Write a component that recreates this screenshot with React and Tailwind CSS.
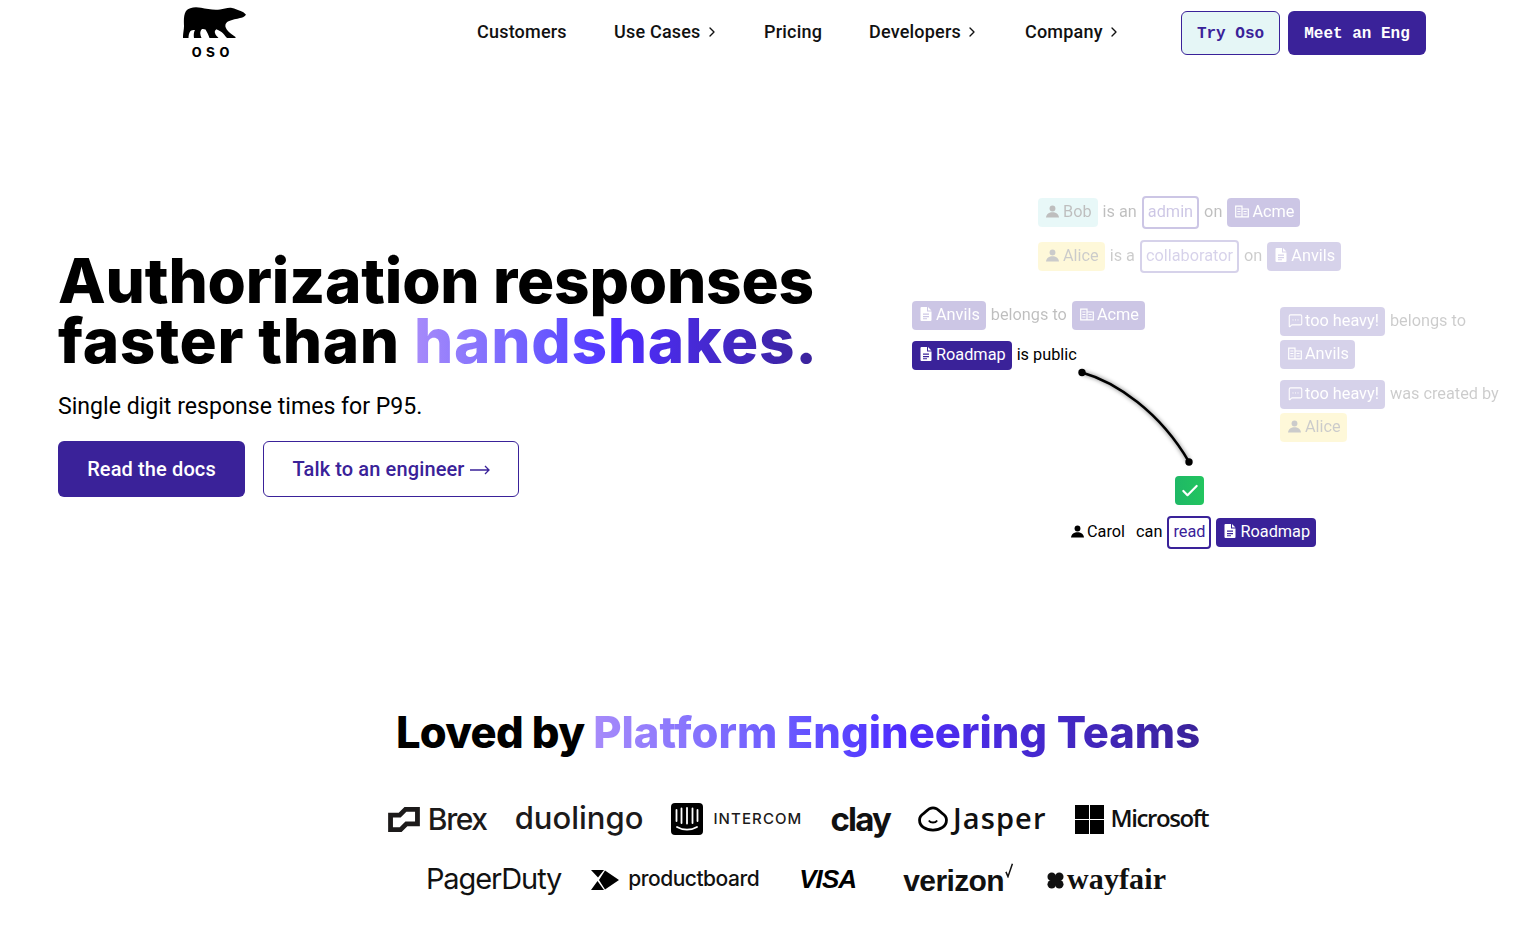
import React from "react";
import { ChevronRight, MessageSquareMore, Check } from "lucide-react";

const UserIcon = ({ className = "" }) => (
  <svg viewBox="0 0 12 12" className={`w-[13px] h-[13px] shrink-0 -mt-[1px] ${className}`} fill="currentColor">
    <circle cx="6" cy="3.2" r="2.7" />
    <path d="M0 11.600C0.300 8.400 3 6.800 6 6.800s5.700 1.600 6 4.800z" />
  </svg>
);
const DocIcon = () => (
  <svg viewBox="0 0 12 14" className="w-[12px] h-[14px] shrink-0 -mt-[2px]">
    <path fill="currentColor" fillRule="evenodd" d="M1.500 0H7V4.500H11.500V13a1 1 0 0 1-1 1H1.500a1 1 0 0 1-1-1V1a1 1 0 0 1 1-1zM8 0L11.500 3.500H8zM3 6.500V7.700H9V6.500zM3 9V10.200H9V9zM3 11.200V12.200H7V11.200z" />
  </svg>
);
const OrgIcon = () => (
  <svg viewBox="0 0 14 12" className="w-[14px] h-[13px] shrink-0 -mt-[2px] -mr-[1px]" fill="none" stroke="currentColor" strokeWidth="1.200">
    <path d="M.7.7H7V11.300H.7zM7 3.500H13.300V11.300H7zM2.300 3.500H5.500M2.300 6H5.500M2.300 8.500H5.500M8.500 6H11.700M8.500 8.500H11.700" />
  </svg>
);
const CommentIcon = () => <MessageSquareMore className="w-[15px] h-[15px] shrink-0 -mt-[2px] -mr-[2px]" strokeWidth={1.7} />;

const Pill = ({ icon, children, color = "purple" }) => {
  const cls = {
    purple: "bg-[#3a2299] text-white",
    cyan: "bg-[#a5e4e4] text-black",
    yellow: "bg-[#fde047] text-black",
  }[color];
  return (
    <span className={`inline-flex h-[29px] items-center gap-[4px] rounded-[4px] pb-[1px] pl-[8px] pr-[6px] ${cls}`}>
      {icon}
      {children}
    </span>
  );
};
const Outline = ({ children }) => (
  <span className="inline-flex h-[33px] items-center rounded-[4px] border-2 border-[#3a2299] px-[4px] pb-[1px] text-[#3a2299]">
    {children}
  </span>
);
const Row = ({ className, children }) => (
  <div className={`absolute flex items-center gap-[5px] whitespace-nowrap text-black ${className}`}>{children}</div>
);

const NavItem = ({ children, chevron, className = "" }) => (
  <a className={`flex items-center gap-[3px] text-[18px] font-medium tracking-[0.2px] text-[#111] ${className}`}>
    {children}
    {chevron && <ChevronRight className="w-[16px] h-[16px] mt-[1px]" strokeWidth={2} />}
  </a>
);

const Bear = () => (
  <svg viewBox="0 0 64 33" className="w-[64px] h-[33px]" fill="#000">
    <path d="M63 7.700C61 10 59 11 57 11C54 12 49 12.500 45.500 14.300C43 15.500 42 17.500 42.500 20C43.500 23 46.500 26 49 27.500L52.500 30V31H44C42 29 40.500 26.500 38.500 25C37 24 35 23 33.300 22.300C32 23.500 31.500 24.500 32 26C32.500 28 34 29.500 35.500 31H26.500C25.500 28 24 25 22.500 22.500C21 21.800 20 21.800 19 22C16.500 24.500 17 28 18.500 31H11C10.500 28 10.800 25 12 23C10 23 8.500 23 7.500 24C6 26 5.500 28.500 5.500 31H0C-0.200 27 1 23 1 19C0.800 14 0.500 8 3 4C6 0.500 12 -0.500 18 0.800C24 2.200 31 3.200 37 2.500C41 2 45 0.300 49 1C52 1.500 54 2.800 57 3.800C59.500 4.500 61.500 6 63 7.700Z" />
  </svg>
);

const Brex = () => (
  <div className="flex items-center gap-[8px]">
    <svg viewBox="0 0 33 26" className="w-[32px] h-[25px]" fill="#1c1a1a">
      <path fillRule="evenodd" d="M0 6H11L17 0H33V20H20L14 26H0zM5 11V21H12L18 15H28V5H19L13 11z" />
    </svg>
    <span className="text-[30px] font-['Inter'] font-medium tracking-[-1.4px] text-[#1c1a1a]">Brex</span>
  </div>
);
const Duolingo = () => (
  <span className="-mt-[4px] text-[31px] font-['Inter'] font-medium tracking-[0px] text-[#1c1a1a] leading-none">duolingo</span>
);
const Intercom = () => (
  <div className="flex items-center gap-[10px]">
    <svg viewBox="0 0 32 32" className="w-[32px] h-[32px]">
      <rect width="32" height="32" rx="4" fill="#000" />
      <g stroke="#fff" strokeWidth="1.800" strokeLinecap="round" fill="none">
        <path d="M5.500 7V18M10.500 5.500V20M16 5V20.500M21.500 5.500V20M26.500 7V18" />
        <path d="M6 24C12 27.500 20 27.500 26 24" />
      </g>
    </svg>
    <span className="text-[15px] font-['Inter'] font-medium tracking-[1.1px] text-[#1c1a1a]">INTERCOM</span>
  </div>
);
const Clay = () => (
  <span className="text-[33px] font-['Inter'] font-bold tracking-[-1.8px] text-[#111] leading-none">clay</span>
);
const Jasper = () => (
  <div className="flex items-center gap-[5px]">
    <svg viewBox="0 0 32 28" className="w-[30px] h-[26px]" fill="none" stroke="#000" strokeWidth="3">
      <path d="M16 2C21 2 23 5.500 26 8C29 10 30.500 12 30.500 15C30.500 22 24 26 16 26C8 26 1.500 22 1.500 15C1.500 12 3 10 6 8C9 5.500 11 2 16 2Z" />
      <path d="M11.500 15.500C13.500 18.500 18.500 18.500 20.500 15.500" strokeWidth="2" />
    </svg>
    <span className="-mt-[3px] text-[29px] font-['Open_Sans'] font-semibold tracking-[1.1px] text-[#111] leading-none">Jasper</span>
  </div>
);
const Microsoft = () => (
  <div className="flex items-center gap-[7px]">
    <div className="grid h-[29px] w-[29px] grid-cols-2 gap-[1px]">
      <div className="bg-black" />
      <div className="bg-black" />
      <div className="bg-black" />
      <div className="bg-black" />
    </div>
    <span className="-mt-[2px] text-[24px] font-['Open_Sans'] font-semibold tracking-[-1.4px] text-[#111] leading-none">Microsoft</span>
  </div>
);
const PagerDuty = () => (
  <span className="-mt-[3px] text-[29px] font-['Inter'] font-normal tracking-[-1.1px] text-[#111] leading-none">PagerDuty</span>
);
const Productboard = () => (
  <div className="flex items-center gap-[9px]">
    <svg viewBox="0 0 28 20" className="w-[28px] h-[20px]" fill="#000">
      <path d="M0 0H13L7 7.500zM0 20H13L6.500 11zM14 0.500L28 10L14 19.500L8 10z" />
    </svg>
    <span className="-mt-[3px] text-[21px] font-['Inter'] font-medium tracking-[-0.5px] text-[#111] leading-none">productboard</span>
  </div>
);
const Visa = () => (
  <span className="text-[26px] font-['Liberation_Sans'] font-bold italic tracking-[-0.9px] text-black leading-none">VISA</span>
);
const Verizon = () => (
  <div className="flex items-start">
    <span className="mt-[1px] text-[30px] font-['Liberation_Sans'] font-bold tracking-[-0.6px] text-[#111] leading-none">verizon</span>
    <svg viewBox="0 0 12 22" className="mt-[-2px] h-[15px] w-[10px]" fill="none" stroke="#111" strokeWidth="2.200">
      <path d="M1.500 13L4.500 20L11 1" />
    </svg>
  </div>
);
const Wayfair = () => (
  <div className="flex items-center gap-[3px]">
    <svg viewBox="0 0 18 18" className="h-[17px] w-[17px]" fill="#111">
      <circle cx="5" cy="5" r="4.500" />
      <circle cx="13" cy="5" r="4.500" />
      <circle cx="5" cy="13" r="4.500" />
      <circle cx="13" cy="13" r="4.500" />
      <rect x="5" y="5" width="8" height="8" />
    </svg>
    <span className="-mt-[3px] text-[30px] font-['Liberation_Serif'] font-bold tracking-[0.1px] text-[#111] leading-none">wayfair</span>
  </div>
);

export default function App() {
  return (
    <div className="min-h-[936px] overflow-hidden bg-white font-['Roboto',sans-serif]">
      <header className="flex h-[64px] items-start">
        <div className="ml-[183px] flex w-[64px] flex-col items-center pt-[7px]">
          <Bear />
          <span className="-ml-[5px] mt-[4px] font-['Inter'] text-[17px] font-semibold leading-[15px] tracking-[4px] text-black">oso</span>
        </div>
        <nav className="ml-[230px] flex h-[64px] items-center pb-[1px]">
          <NavItem className="w-[137px]">Customers</NavItem>
          <NavItem chevron className="w-[150px]">Use Cases</NavItem>
          <NavItem className="w-[105px]">Pricing</NavItem>
          <NavItem chevron className="w-[156px]">Developers</NavItem>
          <NavItem chevron className="w-[156px]">Company</NavItem>
        </nav>
        <div className="mt-[11px] flex gap-[8px] font-['Liberation_Mono',monospace] text-[16px] font-bold">
          <a className="flex h-[44px] w-[99px] items-center justify-center rounded-[6px] border border-[#3a2299] bg-[#e5f6f6] pt-[1px] text-[#3a2299]">Try Oso</a>
          <a className="flex h-[44px] w-[138px] items-center justify-center rounded-[6px] bg-[#3a2299] pt-[1px] text-white">Meet an Eng</a>
        </div>
      </header>

      <main className="flex h-[596px]">
        <section className="w-[842px] shrink-0 pl-[58px] pt-[187px]">
          <h1 className="whitespace-nowrap font-['Inter'] text-[62px] font-extrabold leading-[60px] tracking-[-0.2px] text-black">
            Authorization responses
            <br />
            <span className="tracking-[0.6px]">faster than </span>
            <span className="bg-gradient-to-r from-[#a78bfa] via-[#4f2dff] to-[#3a2299] bg-clip-text tracking-[0.7px] text-transparent">handshakes.</span>
          </h1>
          <p className="mt-[20px] text-[23.1px] leading-[32px] text-black">Single digit response times for P95.</p>
          <div className="mt-[18px] flex gap-[18px] text-[20px] font-medium tracking-[0.12px]">
            <a className="flex h-[56px] w-[187px] items-center justify-center rounded-[6px] bg-[#3a2299] text-white">Read the docs</a>
            <a className="flex h-[56px] w-[256px] items-center justify-center gap-[5px] rounded-[6px] border border-[#3a2299] text-[#3a2299]">
              Talk to an engineer
              <svg viewBox="0 0 20 12" className="mt-[2px] h-[12px] w-[20px]" fill="none" stroke="currentColor" strokeWidth="1.300">
                <path d="M0 6H19M15 2L19 6L15 10" />
              </svg>
            </a>
          </div>
        </section>

        <section className="relative flex-1 text-[16.3px]">
          <Row className="left-[196px] top-[132px] opacity-25">
            <Pill color="cyan" icon={<UserIcon />}>Bob</Pill>
            <span className="pb-[1px]">is an</span>
            <Outline>admin</Outline>
            <span className="pb-[1px]">on</span>
            <Pill icon={<OrgIcon />}>Acme</Pill>
          </Row>
          <Row className="left-[196px] top-[176px] opacity-20">
            <Pill color="yellow" icon={<UserIcon />}>Alice</Pill>
            <span className="pb-[1px]">is a</span>
            <Outline>collaborator</Outline>
            <span className="pb-[1px]">on</span>
            <Pill icon={<DocIcon />}>Anvils</Pill>
          </Row>
          <Row className="left-[70px] top-[237px] opacity-25">
            <Pill icon={<DocIcon />}>Anvils</Pill>
            <span className="pb-[1px]">belongs to</span>
            <Pill icon={<OrgIcon />}>Acme</Pill>
          </Row>
          <Row className="left-[70px] top-[277px]">
            <Pill icon={<DocIcon />}>Roadmap</Pill>
            <span className="pb-[1px]">is public</span>
          </Row>

          <div className="absolute left-[438px] top-[243px] flex flex-col items-start gap-[4px] whitespace-nowrap text-black opacity-20">
            <div className="flex items-center gap-[5px]">
              <Pill icon={<CommentIcon />}>too heavy!</Pill>
              <span className="pb-[1px]">belongs to</span>
            </div>
            <Pill icon={<OrgIcon />}>Anvils</Pill>
            <div className="mt-[7px] flex items-center gap-[5px]">
              <Pill icon={<CommentIcon />}>too heavy!</Pill>
              <span className="pb-[1px]">was created by</span>
            </div>
            <Pill color="yellow" icon={<UserIcon />}>Alice</Pill>
          </div>

          <svg className="absolute left-[230px] top-[300px] overflow-visible" width="130" height="110" fill="none">
            <defs>
              <filter id="sh" x="-20%" y="-20%" width="140%" height="140%">
                <feGaussianBlur stdDeviation="2" />
              </filter>
            </defs>
            <path d="M10 8.500C44 18 88 48 117 98" stroke="#000" strokeOpacity="0.5" strokeWidth="3" filter="url(#sh)" />
            <path d="M10 8.500C44 18 88 48 117 98" stroke="#000" strokeWidth="2.500" />
            <circle cx="10" cy="8.500" r="3.700" fill="#000" />
            <circle cx="117" cy="98" r="3.700" fill="#000" />
          </svg>

          <div className="absolute left-[333px] top-[412px] flex h-[29px] w-[29px] items-center justify-center rounded-[4px] bg-gradient-to-r from-[#1fb866] to-[#22c55e] text-white">
            <Check className="h-[20px] w-[20px]" strokeWidth={2.6} />
          </div>

          <Row className="left-[229px] top-[452px] text-black">
            <span className="mr-[6px] flex items-center gap-[3px] pb-[1px]"><UserIcon />Carol</span>
            <span className="pb-[1px]">can</span>
            <Outline>read</Outline>
            <Pill icon={<DocIcon />}>Roadmap</Pill>
          </Row>
        </section>
      </main>

      <section className="pl-[64px]">
        <h2 className="mt-[44px] text-center font-['Inter'] text-[43.5px] font-extrabold leading-[56px] tracking-[-0.7px] text-black">
          Loved by{" "}
          <span className="bg-gradient-to-r from-[#a78bfa] via-[#4f2dff] to-[#3a2299] bg-clip-text tracking-[0px] text-transparent">Platform Engineering Teams</span>
        </h2>
        <div className="mt-[29px] flex h-[60px] items-center justify-center gap-[28px]">
          <Brex />
          <Duolingo />
          <Intercom />
          <Clay />
          <Jasper />
          <Microsoft />
        </div>
        <div className="mt-[1px] flex h-[60px] items-center justify-center pr-[4px]">
          <PagerDuty />
          <div className="ml-[30px]"><Productboard /></div>
          <div className="ml-[40px]"><Visa /></div>
          <div className="ml-[47px]"><Verizon /></div>
          <div className="ml-[33px]"><Wayfair /></div>
        </div>
      </section>
    </div>
  );
}
